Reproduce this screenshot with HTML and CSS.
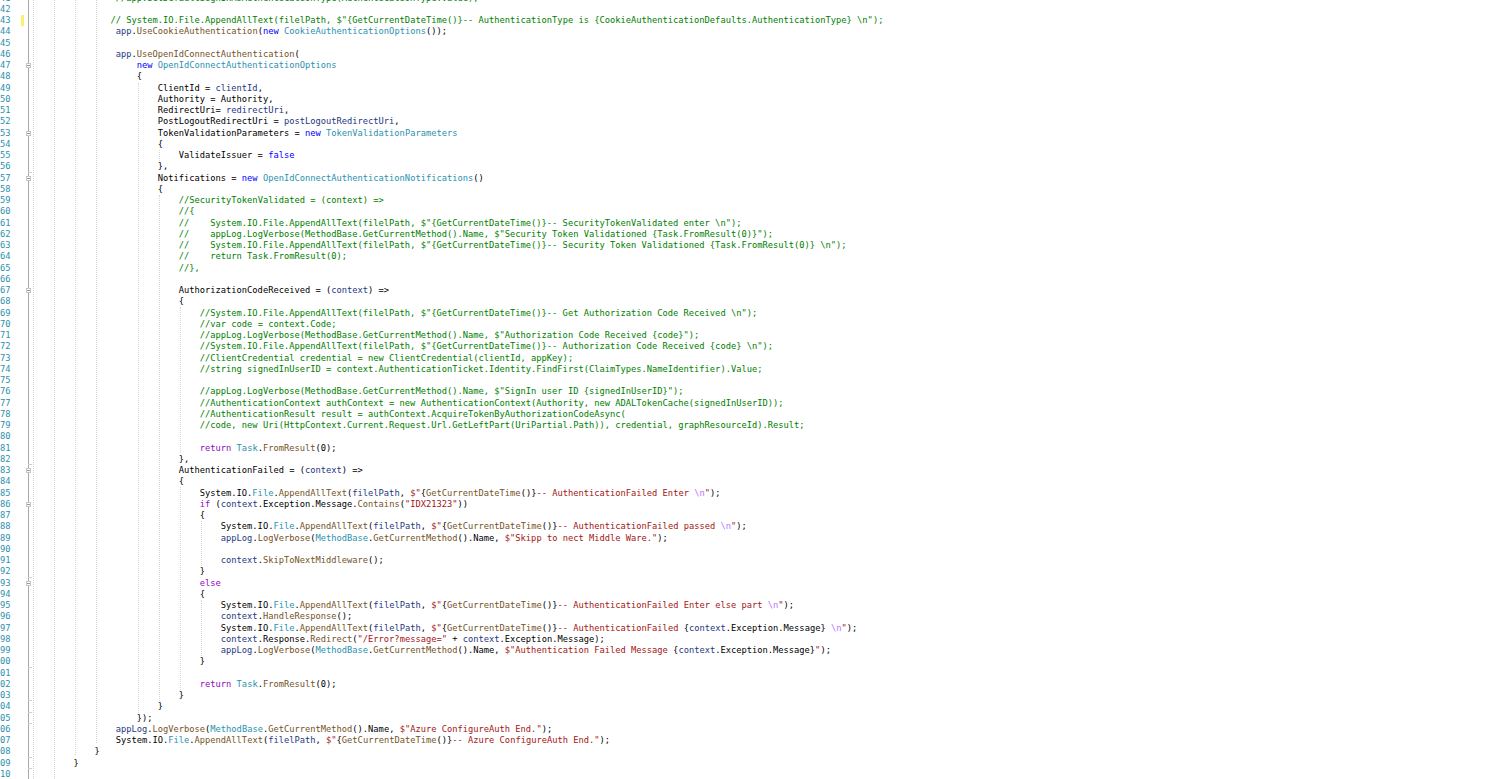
FILE: index.html
```html
<!DOCTYPE html>
<html lang="en">
<head>
<meta charset="utf-8">
<title>Startup.Auth.cs</title>
<link rel="stylesheet" href="styles.css">
</head>
<body>
<main class="editor">
<div class="guides">
<i class="g g-a"></i><i class="g g-b"></i><i class="g g-c"></i><i class="g g-d"></i>
<i class="g g-e"></i><i class="g g-f1"></i><i class="g g-f2"></i>
<i class="g g-h1"></i><i class="g g-h2"></i><i class="g g-j1"></i><i class="g g-j2"></i>
</div>
<div class="row"><span class="num">41</span><span class="mark"></span><span class="fold"></span><code class="code">                <span class="g-t">//app.SetDefaultSignInAsAuthenticationType(AuthenticationType.Value);</span></code></div>
<div class="row"><span class="num">42</span><span class="mark"></span><span class="fold"></span><code class="code"></code></div>
<div class="row"><span class="num">43</span><span class="mark on"></span><span class="fold"></span><code class="code">               <span class="g-t">// System.IO.File.AppendAllText(filelPath, $"{GetCurrentDateTime()}-- AuthenticationType is {CookieAuthenticationDefaults.AuthenticationType} \n");</span></code></div>
<div class="row"><span class="num">44</span><span class="mark"></span><span class="fold"></span><code class="code">                <span class="l">app</span>.<span class="m">UseCookieAuthentication</span>(<span class="k">new</span> <span class="t">CookieAuthenticationOptions</span>());</code></div>
<div class="row"><span class="num">45</span><span class="mark"></span><span class="fold"></span><code class="code"></code></div>
<div class="row"><span class="num">46</span><span class="mark"></span><span class="fold"></span><code class="code">                <span class="l">app</span>.<span class="m">UseOpenIdConnectAuthentication</span>(</code></div>
<div class="row"><span class="num">47</span><span class="mark"></span><span class="fold box"></span><code class="code">                    <span class="k">new</span> <span class="t">OpenIdConnectAuthenticationOptions</span></code></div>
<div class="row"><span class="num">48</span><span class="mark"></span><span class="fold"></span><code class="code">                    {</code></div>
<div class="row"><span class="num">49</span><span class="mark"></span><span class="fold"></span><code class="code">                        ClientId = <span class="l">clientId</span>,</code></div>
<div class="row"><span class="num">50</span><span class="mark"></span><span class="fold"></span><code class="code">                        Authority = Authority,</code></div>
<div class="row"><span class="num">51</span><span class="mark"></span><span class="fold"></span><code class="code">                        RedirectUri= <span class="l">redirectUri</span>,</code></div>
<div class="row"><span class="num">52</span><span class="mark"></span><span class="fold"></span><code class="code">                        PostLogoutRedirectUri = <span class="l">postLogoutRedirectUri</span>,</code></div>
<div class="row"><span class="num">53</span><span class="mark"></span><span class="fold box"></span><code class="code">                        TokenValidationParameters = <span class="k">new</span> <span class="t">TokenValidationParameters</span></code></div>
<div class="row"><span class="num">54</span><span class="mark"></span><span class="fold"></span><code class="code">                        {</code></div>
<div class="row"><span class="num">55</span><span class="mark"></span><span class="fold"></span><code class="code">                            ValidateIssuer = <span class="k">false</span></code></div>
<div class="row"><span class="num">56</span><span class="mark"></span><span class="fold end"></span><code class="code">                        },</code></div>
<div class="row"><span class="num">57</span><span class="mark"></span><span class="fold box"></span><code class="code">                        Notifications = <span class="k">new</span> <span class="t">OpenIdConnectAuthenticationNotifications</span>()</code></div>
<div class="row"><span class="num">58</span><span class="mark"></span><span class="fold"></span><code class="code">                        {</code></div>
<div class="row"><span class="num">59</span><span class="mark"></span><span class="fold"></span><code class="code">                            <span class="g-t">//SecurityTokenValidated = (context) =&gt;</span></code></div>
<div class="row"><span class="num">60</span><span class="mark"></span><span class="fold"></span><code class="code">                            <span class="g-t">//{</span></code></div>
<div class="row"><span class="num">61</span><span class="mark"></span><span class="fold"></span><code class="code">                            <span class="g-t">//    System.IO.File.AppendAllText(filelPath, $"{GetCurrentDateTime()}-- SecurityTokenValidated enter \n");</span></code></div>
<div class="row"><span class="num">62</span><span class="mark"></span><span class="fold"></span><code class="code">                            <span class="g-t">//    appLog.LogVerbose(MethodBase.GetCurrentMethod().Name, $"Security Token Validationed {Task.FromResult(0)}");</span></code></div>
<div class="row"><span class="num">63</span><span class="mark"></span><span class="fold"></span><code class="code">                            <span class="g-t">//    System.IO.File.AppendAllText(filelPath, $"{GetCurrentDateTime()}-- Security Token Validationed {Task.FromResult(0)} \n");</span></code></div>
<div class="row"><span class="num">64</span><span class="mark"></span><span class="fold"></span><code class="code">                            <span class="g-t">//    return Task.FromResult(0);</span></code></div>
<div class="row"><span class="num">65</span><span class="mark"></span><span class="fold"></span><code class="code">                            <span class="g-t">//},</span></code></div>
<div class="row"><span class="num">66</span><span class="mark"></span><span class="fold"></span><code class="code"></code></div>
<div class="row"><span class="num">67</span><span class="mark"></span><span class="fold box"></span><code class="code">                            AuthorizationCodeReceived = (<span class="l">context</span>) =&gt;</code></div>
<div class="row"><span class="num">68</span><span class="mark"></span><span class="fold"></span><code class="code">                            {</code></div>
<div class="row"><span class="num">69</span><span class="mark"></span><span class="fold"></span><code class="code">                                <span class="g-t">//System.IO.File.AppendAllText(filelPath, $"{GetCurrentDateTime()}-- Get Authorization Code Received \n");</span></code></div>
<div class="row"><span class="num">70</span><span class="mark"></span><span class="fold"></span><code class="code">                                <span class="g-t">//var code = context.Code;</span></code></div>
<div class="row"><span class="num">71</span><span class="mark"></span><span class="fold"></span><code class="code">                                <span class="g-t">//appLog.LogVerbose(MethodBase.GetCurrentMethod().Name, $"Authorization Code Received {code}");</span></code></div>
<div class="row"><span class="num">72</span><span class="mark"></span><span class="fold"></span><code class="code">                                <span class="g-t">//System.IO.File.AppendAllText(filelPath, $"{GetCurrentDateTime()}-- Authorization Code Received {code} \n");</span></code></div>
<div class="row"><span class="num">73</span><span class="mark"></span><span class="fold"></span><code class="code">                                <span class="g-t">//ClientCredential credential = new ClientCredential(clientId, appKey);</span></code></div>
<div class="row"><span class="num">74</span><span class="mark"></span><span class="fold"></span><code class="code">                                <span class="g-t">//string signedInUserID = context.AuthenticationTicket.Identity.FindFirst(ClaimTypes.NameIdentifier).Value;</span></code></div>
<div class="row"><span class="num">75</span><span class="mark"></span><span class="fold"></span><code class="code"></code></div>
<div class="row"><span class="num">76</span><span class="mark"></span><span class="fold"></span><code class="code">                                <span class="g-t">//appLog.LogVerbose(MethodBase.GetCurrentMethod().Name, $"SignIn user ID {signedInUserID}");</span></code></div>
<div class="row"><span class="num">77</span><span class="mark"></span><span class="fold"></span><code class="code">                                <span class="g-t">//AuthenticationContext authContext = new AuthenticationContext(Authority, new ADALTokenCache(signedInUserID));</span></code></div>
<div class="row"><span class="num">78</span><span class="mark"></span><span class="fold"></span><code class="code">                                <span class="g-t">//AuthenticationResult result = authContext.AcquireTokenByAuthorizationCodeAsync(</span></code></div>
<div class="row"><span class="num">79</span><span class="mark"></span><span class="fold"></span><code class="code">                                <span class="g-t">//code, new Uri(HttpContext.Current.Request.Url.GetLeftPart(UriPartial.Path)), credential, graphResourceId).Result;</span></code></div>
<div class="row"><span class="num">80</span><span class="mark"></span><span class="fold"></span><code class="code"></code></div>
<div class="row"><span class="num">81</span><span class="mark"></span><span class="fold"></span><code class="code">                                <span class="c">return</span> <span class="t">Task</span>.<span class="m">FromResult</span>(0);</code></div>
<div class="row"><span class="num">82</span><span class="mark"></span><span class="fold end"></span><code class="code">                            },</code></div>
<div class="row"><span class="num">83</span><span class="mark"></span><span class="fold box"></span><code class="code">                            AuthenticationFailed = (<span class="l">context</span>) =&gt;</code></div>
<div class="row"><span class="num">84</span><span class="mark"></span><span class="fold"></span><code class="code">                            {</code></div>
<div class="row"><span class="num">85</span><span class="mark"></span><span class="fold"></span><code class="code">                                System.IO.<span class="t">File</span>.<span class="m">AppendAllText</span>(<span class="l">filelPath</span>, <span class="s">$"</span>{<span class="m">GetCurrentDateTime</span>()}<span class="s">-- AuthenticationFailed Enter </span><span class="e">\n</span><span class="s">"</span>);</code></div>
<div class="row"><span class="num">86</span><span class="mark"></span><span class="fold box"></span><code class="code">                                <span class="c">if</span> (<span class="l">context</span>.Exception.Message.<span class="m">Contains</span>(<span class="s">"IDX21323"</span>))</code></div>
<div class="row"><span class="num">87</span><span class="mark"></span><span class="fold"></span><code class="code">                                {</code></div>
<div class="row"><span class="num">88</span><span class="mark"></span><span class="fold"></span><code class="code">                                    System.IO.<span class="t">File</span>.<span class="m">AppendAllText</span>(<span class="l">filelPath</span>, <span class="s">$"</span>{<span class="m">GetCurrentDateTime</span>()}<span class="s">-- AuthenticationFailed passed </span><span class="e">\n</span><span class="s">"</span>);</code></div>
<div class="row"><span class="num">89</span><span class="mark"></span><span class="fold"></span><code class="code">                                    <span class="l">appLog</span>.<span class="m">LogVerbose</span>(<span class="t">MethodBase</span>.<span class="m">GetCurrentMethod</span>().Name, <span class="s">$"Skipp to nect Middle Ware."</span>);</code></div>
<div class="row"><span class="num">90</span><span class="mark"></span><span class="fold"></span><code class="code"></code></div>
<div class="row"><span class="num">91</span><span class="mark"></span><span class="fold"></span><code class="code">                                    <span class="l">context</span>.<span class="m">SkipToNextMiddleware</span>();</code></div>
<div class="row"><span class="num">92</span><span class="mark"></span><span class="fold end"></span><code class="code">                                }</code></div>
<div class="row"><span class="num">93</span><span class="mark"></span><span class="fold box"></span><code class="code">                                <span class="c">else</span></code></div>
<div class="row"><span class="num">94</span><span class="mark"></span><span class="fold"></span><code class="code">                                {</code></div>
<div class="row"><span class="num">95</span><span class="mark"></span><span class="fold"></span><code class="code">                                    System.IO.<span class="t">File</span>.<span class="m">AppendAllText</span>(<span class="l">filelPath</span>, <span class="s">$"</span>{<span class="m">GetCurrentDateTime</span>()}<span class="s">-- AuthenticationFailed Enter else part </span><span class="e">\n</span><span class="s">"</span>);</code></div>
<div class="row"><span class="num">96</span><span class="mark"></span><span class="fold"></span><code class="code">                                    <span class="l">context</span>.<span class="m">HandleResponse</span>();</code></div>
<div class="row"><span class="num">97</span><span class="mark"></span><span class="fold"></span><code class="code">                                    System.IO.<span class="t">File</span>.<span class="m">AppendAllText</span>(<span class="l">filelPath</span>, <span class="s">$"</span>{<span class="m">GetCurrentDateTime</span>()}<span class="s">-- AuthenticationFailed </span>{<span class="l">context</span>.Exception.Message}<span class="s"> </span><span class="e">\n</span><span class="s">"</span>);</code></div>
<div class="row"><span class="num">98</span><span class="mark"></span><span class="fold"></span><code class="code">                                    <span class="l">context</span>.Response.<span class="m">Redirect</span>(<span class="s">"/Error?message="</span> + <span class="l">context</span>.Exception.Message);</code></div>
<div class="row"><span class="num">99</span><span class="mark"></span><span class="fold"></span><code class="code">                                    <span class="l">appLog</span>.<span class="m">LogVerbose</span>(<span class="t">MethodBase</span>.<span class="m">GetCurrentMethod</span>().Name, <span class="s">$"Authentication Failed Message </span>{<span class="l">context</span>.Exception.Message}<span class="s">"</span>);</code></div>
<div class="row"><span class="num">100</span><span class="mark"></span><span class="fold end"></span><code class="code">                                }</code></div>
<div class="row"><span class="num">101</span><span class="mark"></span><span class="fold"></span><code class="code"></code></div>
<div class="row"><span class="num">102</span><span class="mark"></span><span class="fold"></span><code class="code">                                <span class="c">return</span> <span class="t">Task</span>.<span class="m">FromResult</span>(0);</code></div>
<div class="row"><span class="num">103</span><span class="mark"></span><span class="fold end"></span><code class="code">                            }</code></div>
<div class="row"><span class="num">104</span><span class="mark"></span><span class="fold end"></span><code class="code">                        }</code></div>
<div class="row"><span class="num">105</span><span class="mark"></span><span class="fold end"></span><code class="code">                    });</code></div>
<div class="row"><span class="num">106</span><span class="mark"></span><span class="fold"></span><code class="code">                <span class="l">appLog</span>.<span class="m">LogVerbose</span>(<span class="t">MethodBase</span>.<span class="m">GetCurrentMethod</span>().Name, <span class="s">$"Azure ConfigureAuth End."</span>);</code></div>
<div class="row"><span class="num">107</span><span class="mark"></span><span class="fold"></span><code class="code">                System.IO.<span class="t">File</span>.<span class="m">AppendAllText</span>(<span class="l">filelPath</span>, <span class="s">$"</span>{<span class="m">GetCurrentDateTime</span>()}<span class="s">-- Azure ConfigureAuth End."</span>);</code></div>
<div class="row"><span class="num">108</span><span class="mark"></span><span class="fold end"></span><code class="code">            }</code></div>
<div class="row"><span class="num">109</span><span class="mark"></span><span class="fold end"></span><code class="code">        }</code></div>
<div class="row"><span class="num">110</span><span class="mark"></span><span class="fold"></span><code class="code"></code></div>
</main>
</body>
</html>
```

FILE: styles.css
```css
html, body {
  margin: 0;
  height: 100%;
  background: #fff;
  overflow: hidden;
}

.editor {
  position: relative;
  height: 779px;
  overflow: hidden;
  font-family: "DejaVu Sans Mono", "Liberation Mono", monospace;
  font-size: 8.745px;
  line-height: 11.25px;
  color: #000;
}

.row {
  display: grid;
  grid-template-columns: 10.5px 10.5px 3px 7.5px 1fr;
  height: 11.25px;
}

.guides + .row {
  margin-top: -7.5px;
}

.num {
  display: flex;
  justify-content: flex-end;
  overflow: hidden;
  color: #2b91af;
}

.mark {
  grid-column: 3;
}

.mark.on {
  background: #fff06a;
}

.fold {
  position: relative;
}

.fold::before {
  content: "";
  position: absolute;
  left: 4px;
  top: 0;
  bottom: 0;
  width: 1px;
  background: #a8a8a8;
}

.fold.box::after {
  content: "";
  position: absolute;
  left: 2px;
  top: 3px;
  width: 3px;
  height: 3px;
  border: 1px solid #c6c6c6;
  background: linear-gradient(#fff 1px, #9a9a9a 1px, #9a9a9a 2px, #fff 2px);
}

.fold.end::after {
  content: "";
  position: absolute;
  left: 4px;
  bottom: 0;
  width: 4px;
  height: 1px;
  background: #d0d0d0;
}

.code {
  font: inherit;
  white-space: pre;
}

.g-t { color: #008000; }
.t { color: #2b91af; }
.k { color: #0000ff; }
.c { color: #8f08c4; }
.s { color: #a31515; }
.e { color: #b776fb; }
.m { color: #74531f; }
.l { color: #1f377f; }

.g {
  position: absolute;
  width: 0;
  border-left: 1px dotted #d6d6d6;
}

.g-a { left: 33px; top: 0; height: 779px; }
.g-b { left: 54px; top: 0; height: 779px; }
.g-c { left: 75px; top: 0; height: 755px; }
.g-d { left: 96px; top: 0; height: 743px; }
.g-e { left: 138px; top: 83px; height: 630px; }
.g-f1 { left: 159px; top: 150px; height: 11px; }
.g-f2 { left: 159px; top: 195px; height: 506px; }
.g-h1 { left: 180px; top: 307px; height: 146px; }
.g-h2 { left: 180px; top: 487px; height: 203px; }
.g-j1 { left: 201px; top: 521px; height: 45px; }
.g-j2 { left: 201px; top: 600px; height: 56px; }
```
